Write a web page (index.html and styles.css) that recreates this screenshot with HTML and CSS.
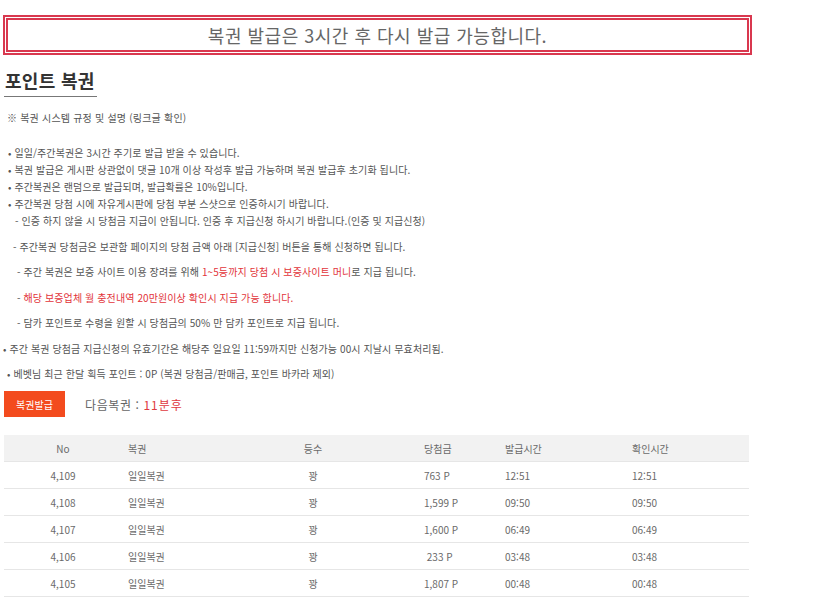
FILE: index.html
```html
<!DOCTYPE html>
<html lang="ko">
<head>
<meta charset="utf-8">
<title>포인트 복권</title>
<link rel="stylesheet" href="styles.css">
</head>
<body>
<div class="page">
  <div class="notice">복권 발급은 3시간 후 다시 발급 가능합니다.</div>

  <h2 class="title">포인트 복권</h2>

  <p class="guide">※ 복권 시스템 규정 및 설명 (링크글 확인)</p>

  <div class="rules">
    <div class="line b1">• 일일/주간복권은 3시간 주기로 발급 받을 수 있습니다.</div>
    <div class="line b1">• 복권 발급은 게시판 상관없이 댓글 10개 이상 작성후 발급 가능하며 복권 발급후 초기화 됩니다.</div>
    <div class="line b1">• 주간복권은 랜덤으로 발급되며, 발급확률은 10%입니다.</div>
    <div class="line b1">• 주간복권 당첨 시에 자유게시판에 당첨 부분 스샷으로 인증하시기 바랍니다.</div>
    <div class="line d1">- 인증 하지 않을 시 당첨금 지급이 안됩니다. 인증 후 지급신청 하시기 바랍니다.(인증 및 지급신청)</div>
    <div class="line wide d0">- 주간복권 당첨금은 보관함 페이지의 당첨 금액 아래 [지급신청] 버튼을 통해 신청하면 됩니다.</div>
    <div class="line wide d2">- 주간 복권은 보증 사이트 이용 장려를 위해 <span class="red">1~5등까지 당첨 시 보증사이트 머니</span>로 지급 됩니다.</div>
    <div class="line wide d2">- <span class="red">해당 보증업체 월 충전내역 20만원이상 확인시 지급 가능 합니다.</span></div>
    <div class="line wide d2">- 담카 포인트로 수령을 원할 시 당첨금의 50% 만 담카 포인트로 지급 됩니다.</div>
    <div class="line wide b0">• 주간 복권 당첨금 지급신청의 유효기간은 해당주 일요일 11:59까지만 신청가능 00시 지날시 무효처리됨.</div>
    <div class="line wide b2">• 베벳님 최근 한달 획득 포인트 : 0P (복권 당첨금/판매금, 포인트 바카라 제외)</div>
  </div>

  <div class="issue">
    <button class="issue-btn" type="button">복권발급</button>
    <span class="next">다음복권 : <span class="next-time">11분후</span></span>
  </div>

  <div class="table">
    <div class="row head">
      <div class="c c1">No</div><div class="c c2">복권</div><div class="c c3">등수</div><div class="c c4">당첨금</div><div class="c c5">발급시간</div><div class="c c6">확인시간</div>
    </div>
    <div class="row">
      <div class="c c1">4,109</div><div class="c c2">일일복권</div><div class="c c3">꽝</div><div class="c c4">763 P</div><div class="c c5">12:51</div><div class="c c6">12:51</div>
    </div>
    <div class="row">
      <div class="c c1">4,108</div><div class="c c2">일일복권</div><div class="c c3">꽝</div><div class="c c4">1,599 P</div><div class="c c5">09:50</div><div class="c c6">09:50</div>
    </div>
    <div class="row">
      <div class="c c1">4,107</div><div class="c c2">일일복권</div><div class="c c3">꽝</div><div class="c c4">1,600 P</div><div class="c c5">06:49</div><div class="c c6">06:49</div>
    </div>
    <div class="row">
      <div class="c c1">4,106</div><div class="c c2">일일복권</div><div class="c c3">꽝</div><div class="c c4">&nbsp;233 P</div><div class="c c5">03:48</div><div class="c c6">03:48</div>
    </div>
    <div class="row">
      <div class="c c1">4,105</div><div class="c c2">일일복권</div><div class="c c3">꽝</div><div class="c c4">1,807 P</div><div class="c c5">00:48</div><div class="c c6">00:48</div>
    </div>
  </div>
</div>
</body>
</html>
```

FILE: styles.css
```css
* { box-sizing: border-box; }

html, body {
  margin: 0;
  padding: 0;
  background: #fff;
}

body {
  font-family: "Noto Sans CJK KR", "Noto Sans", sans-serif;
  color: #555;
}

.page {
  padding: 15px 0 0 3px;
  width: 752px;
}

.notice {
  height: 40px;
  border: 5px double #d9384f;
  font-size: 18px;
  letter-spacing: 0.5px;
  line-height: 30px;
  text-align: center;
  color: #666;
}

.title {
  display: inline-block;
  margin: 13px 0 0 1px;
  padding: 0 2px 4px 1px;
  font-size: 18px;
  letter-spacing: 0.3px;
  line-height: 24px;
  font-weight: bold;
  color: #333;
  border-bottom: 1px solid #777;
}

.guide {
  margin: 12px 0 0 4px;
  font-size: 10px;
  letter-spacing: 0.2px;
  line-height: 17px;
  color: #555;
}

.rules {
  margin-top: 18px;
  font-size: 10px;
  letter-spacing: 0.1px;
  color: #555;
}

.line {
  height: 17px;
  line-height: 17px;
  white-space: nowrap;
}

.line.wide { margin-top: 8.5px; }

.b0 { padding-left: 0; }
.b1 { padding-left: 5px; }
.b2 { padding-left: 4px; }
.d0 { padding-left: 10px; }
.d1 { padding-left: 12px; }
.d2 { padding-left: 14px; }

.red { color: #e2343a; }

.issue {
  margin-top: 9px;
  display: flex;
  align-items: center;
  gap: 20px;
  padding-left: 1px;
}

.issue-btn {
  width: 61px;
  height: 26px;
  border: 0;
  padding: 0;
  background: #f34b1e;
  color: #fff;
  font-family: "Noto Sans CJK KR", "Noto Sans", sans-serif;
  font-size: 10px;
}

.next {
  font-size: 12px;
  letter-spacing: 0.6px;
  color: #666;
}

.next-time { color: #e03a40; letter-spacing: 1px; }

.table {
  margin-top: 18px;
  margin-left: 1px;
  width: 745px;
  font-size: 10px;
  color: #6a6a6a;
}

.row {
  display: grid;
  grid-template-columns: 118px 132px 118px 127px 127px 123px;
  height: 27px;
  align-items: center;
  border-bottom: 1px solid #e6e6e6;
}

.row.head {
  background: #f2f2f2;
  border-bottom: 1px solid #e6e6e6;
}

.c { white-space: nowrap; }
.c1 { text-align: center; }
.c2 { padding-left: 6px; }
.c3 { text-align: center; }
.c4 { padding-left: 52px; }
.c5 { padding-left: 6px; }
.c6 { padding-left: 6px; }
```
